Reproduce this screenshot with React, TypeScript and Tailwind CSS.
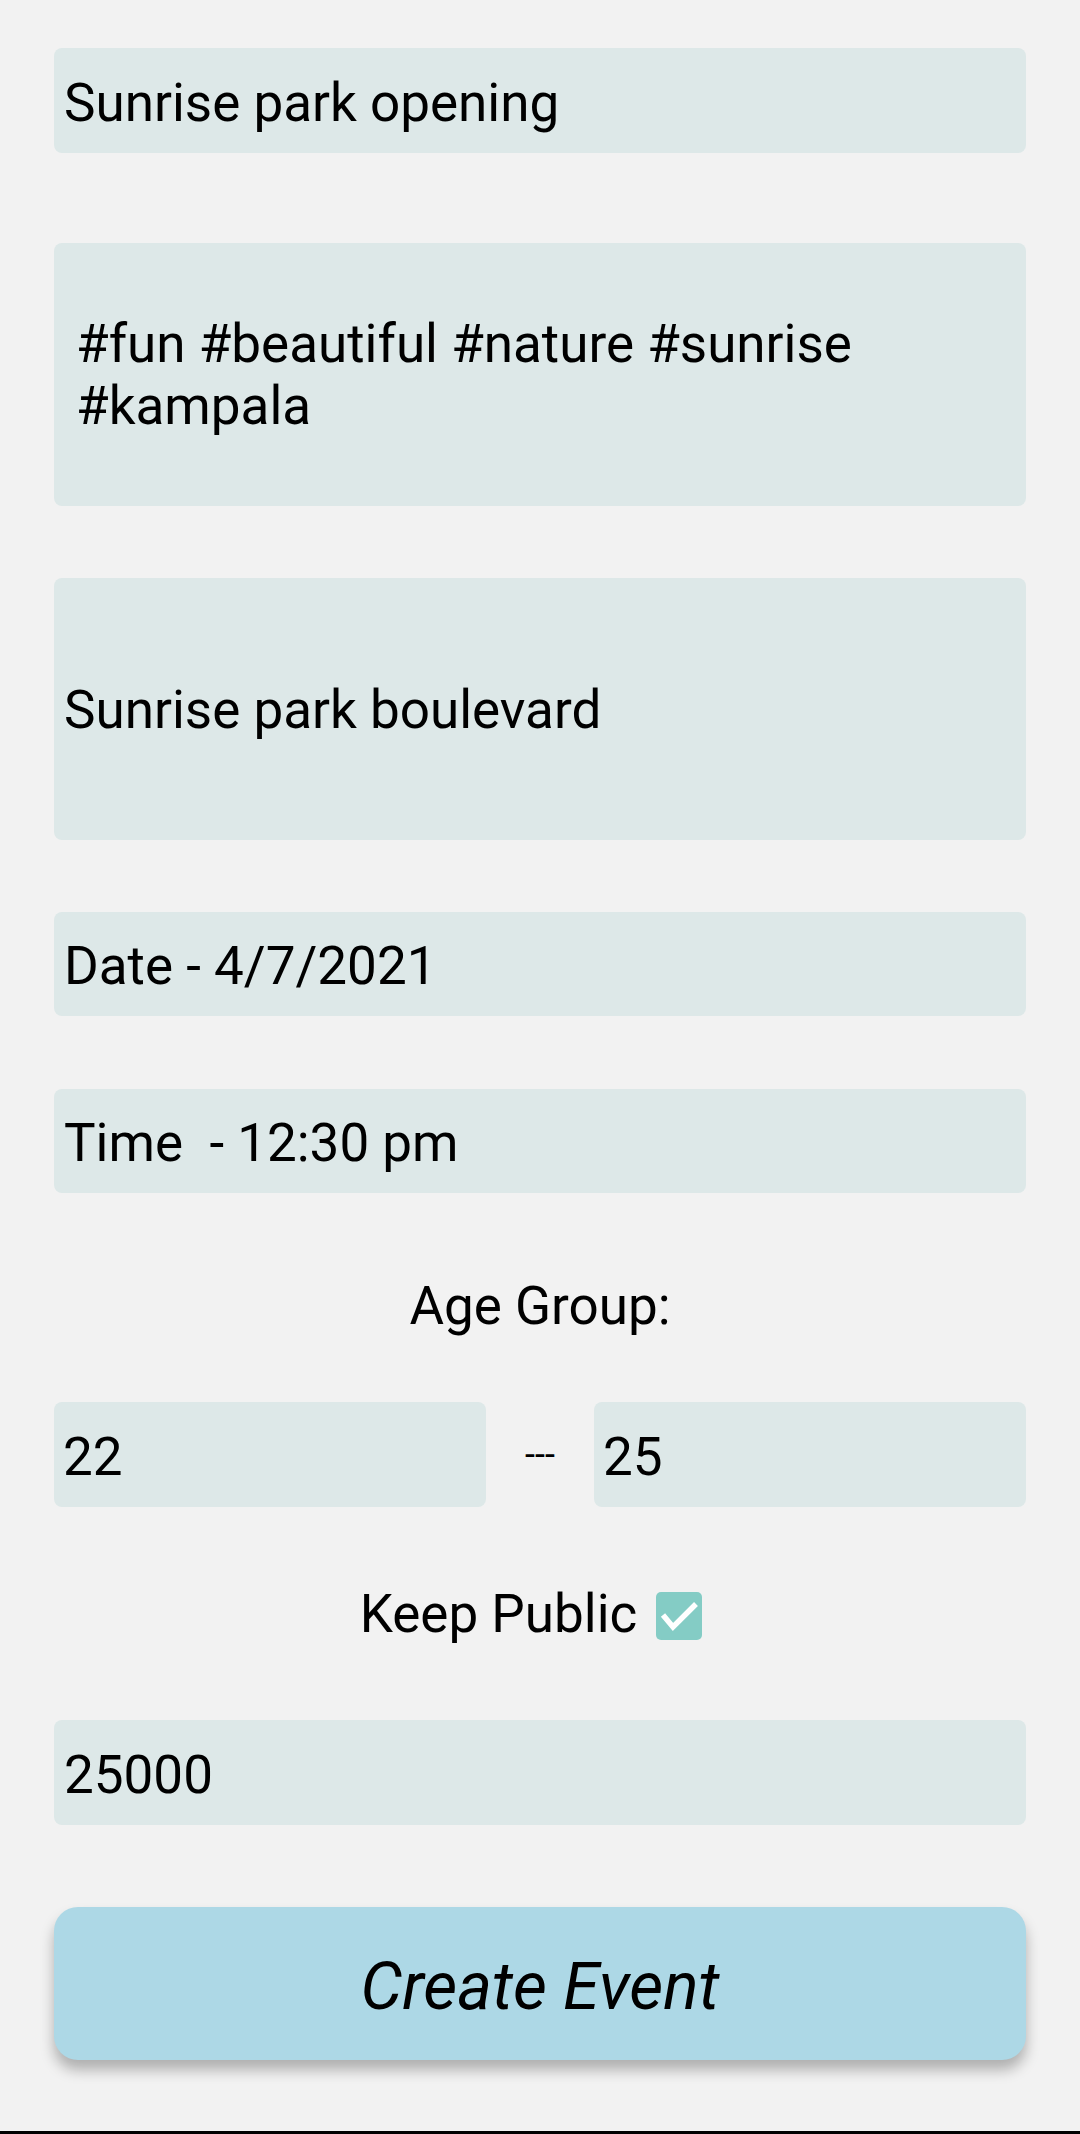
import React from "react";

const font = { fontFamily: "Roboto, 'Noto Sans', sans-serif" };

function Field({ children, className = "" }: { children: React.ReactNode; className?: string }) {
  return (
    <div className={`flex items-center rounded-[8px] bg-[#dde8e8] text-[53px] leading-[62px] text-black ${className}`}>
      {children}
    </div>
  );
}

export default function App() {
  return (
    <div className="flex h-[2134px] w-[1080px] flex-col bg-[#f2f2f2]" style={font}>
      <div className="flex flex-col px-[54px]">
        <Field className="mt-[48px] h-[105px] pl-[10px] pt-[5px]">Sunrise park opening</Field>
        <Field className="mt-[90px] h-[263px] pl-[22px]">
          <div>
            #fun #beautiful #nature #sunrise
            <br />
            #kampala
          </div>
        </Field>
        <Field className="mt-[72px] h-[262px] pl-[10px] pt-[2px]">Sunrise park boulevard</Field>
        <Field className="mt-[72px] h-[104px] pl-[10px] pt-[4px]">Date - 4/7/2021</Field>
        <Field className="mt-[73px] h-[104px] pl-[10px] pt-[4px]">Time&nbsp; - 12:30 pm</Field>
        <div className="mt-[82px] text-center text-[53px] leading-[62px] text-black">Age Group:</div>
        <div className="mt-[65px] flex h-[105px] items-center">
          <Field className="h-full w-[432px] pl-[9px] pt-[4px]">22</Field>
          <div className="flex w-[108px] justify-center text-[36px] leading-none text-black">---</div>
          <Field className="h-full w-[432px] pl-[9px] pt-[4px]">25</Field>
        </div>
        <div className="mt-[76px] flex h-[62px] items-center justify-center gap-[19px] pr-[18px]">
          <span className="text-[53px] leading-[62px] text-black">Keep Public</span>
          <div className="mt-[4px] flex h-[48px] w-[46px] items-center justify-center rounded-[5px] bg-[#84ccc5]">
            <svg width="46" height="48" viewBox="0 0 46 48">
              <path d="M7 23 L17 35 L40 12" fill="none" stroke="white" strokeWidth="5.5" strokeLinecap="butt" strokeLinejoin="miter" />
            </svg>
          </div>
        </div>
        <Field className="mt-[75px] h-[105px] pl-[10px] pt-[4px]">25000</Field>
        <button className="mt-[82px] flex h-[153px] items-center justify-center rounded-[24px] bg-[#add8e6] pt-[6px] text-[66px] italic text-black shadow-[0_10px_14px_rgba(0,0,0,0.28)]">
          Create Event
        </button>
      </div>
      <div className="mt-auto h-[3px] bg-black" />
    </div>
  );
}
